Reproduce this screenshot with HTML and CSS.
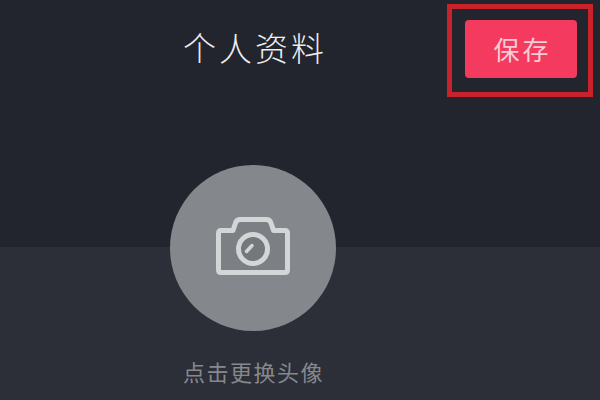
FILE: index.html
```html
<!DOCTYPE html>
<html lang="zh-CN">
<head>
<meta charset="utf-8">
<title>个人资料</title>
<link rel="stylesheet" href="styles.css">
</head>
<body>
<main class="page">
  <section class="top">
    <header class="bar">
      <h1 class="title">个人资料</h1>
      <div class="highlight">
        <button class="save" type="button">保存</button>
      </div>
    </header>
  </section>
  <section class="bottom">
    <p class="hint">点击更换头像</p>
  </section>
  <div class="avatar">
    <svg class="camera" viewBox="0 0 74 62" width="74" height="62" fill="none" stroke="#d4d5d7" stroke-width="5" stroke-linejoin="round" stroke-linecap="round">
      <path d="M5 13.500H17L19.500 6Q20.500 2.500 24.500 2.500H50Q54 2.500 55 6L57.500 13.500H69Q71.500 13.500 71.500 16.500V53Q71.500 55.500 69 55.500H5Q2.500 55.500 2.500 53V16.500Q2.500 13.500 5 13.500Z" fill="#7c7f84"/>
      <circle cx="37" cy="32" r="14.500" fill="#74777c"/>
      <path d="M30.500 34.500L36 28.500" stroke-width="3.500"/>
    </svg>
  </div>
</main>
</body>
</html>
```
FILE: styles.css
```css
* {
  box-sizing: border-box;
}

html, body {
  margin: 0;
  padding: 0;
  background: #2c2f38;
}

.page {
  position: relative;
  width: 600px;
  height: 400px;
  overflow: hidden;
  display: flex;
  flex-direction: column;
  font-family: "Noto Sans CJK SC", "Noto Sans", sans-serif;
  background: #2c2f38;
}

.top {
  height: 247px;
  background: #22252e;
  flex: none;
}

.bar {
  display: flex;
  align-items: flex-start;
  padding: 4px 7px 0 183px;
}

.title {
  margin: 16px 0 0;
  font-size: 33px;
  line-height: 54px;
  font-weight: 300;
  letter-spacing: 3px;
  color: #eceded;
  white-space: nowrap;
}

.highlight {
  margin-left: auto;
  width: 146px;
  height: 93px;
  border: 5px solid #c9222b;
  padding: 11px 11px 0 13px;
}

.save {
  display: block;
  width: 112px;
  height: 58px;
  border: 0;
  border-radius: 4px;
  background: #f43a5e;
  color: #f8ccd5;
  font-family: inherit;
  font-size: 26px;
  font-weight: 400;
  line-height: 58px;
  letter-spacing: 3px;
  padding: 0 0 0 3px;
}

.bottom {
  flex: 1;
  padding-top: 106px;
}

.hint {
  margin: 0 0 0 183px;
  font-size: 22px;
  line-height: 36px;
  font-weight: 400;
  letter-spacing: 1.500px;
  color: #86888d;
  white-space: nowrap;
}

.avatar {
  position: absolute;
  left: 170px;
  top: 165px;
  width: 166px;
  height: 166px;
  border-radius: 50%;
  background: #84878c;
  display: flex;
  align-items: center;
  justify-content: center;
}

.camera {
  display: block;
}
```
